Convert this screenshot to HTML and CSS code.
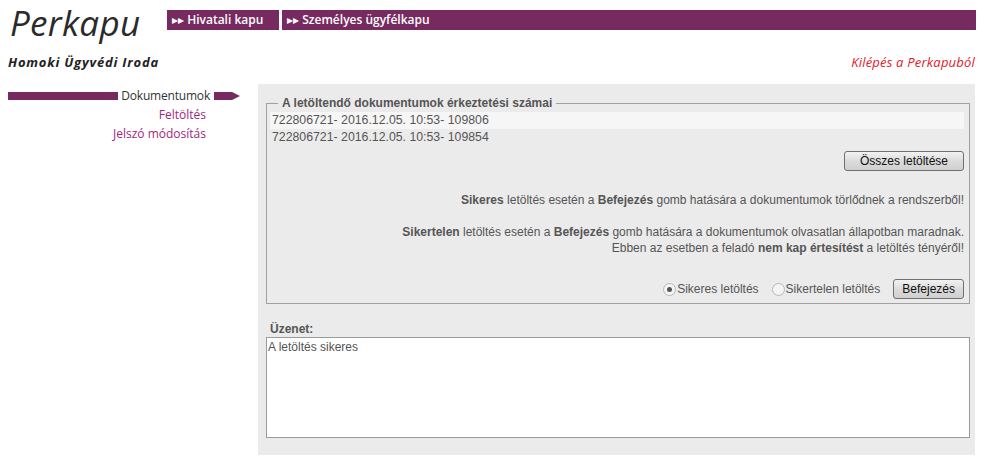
FILE: index.html
```html
<!DOCTYPE html>
<html lang="hu">
<head>
    <meta charset="UTF-8">
    <title>Perkapu</title>
    <link rel="stylesheet" href="styles.css">
</head>
<body>
    <div class="header">
        <div class="logo">Perkapu</div>
        <div class="topnav">
            <a class="topnav-item first">&#9656;&#9656; Hivatali kapu</a>
            <a class="topnav-item">&#9656;&#9656; Személyes ügyfélkapu</a>
        </div>
    </div>

    <div class="subheader">
        <span class="office">Homoki Ügyvédi Iroda</span>
        <a class="logout">Kilépés a Perkapuból</a>
    </div>

    <div class="page">
        <div class="sidemenu">
            <div class="menu-item active"><span>Dokumentumok</span></div>
            <div class="menu-item">Feltöltés</div>
            <div class="menu-item">Jelszó módosítás</div>
        </div>

        <div class="content">
            <fieldset class="docs">
                <legend>A letöltendő dokumentumok érkeztetési számai</legend>
                <div class="doc-row odd">722806721- 2016.12.05. 10:53- 109806</div>
                <div class="doc-row">722806721- 2016.12.05. 10:53- 109854</div>

                <div class="btn-line">
                    <button class="btn wide">Összes letöltése</button>
                </div>

                <p class="note"><b>Sikeres</b> letöltés esetén a <b>Befejezés</b> gomb hatására a dokumentumok törlődnek a rendszerből!</p>
                <p class="note"><b>Sikertelen</b> letöltés esetén a <b>Befejezés</b> gomb hatására a dokumentumok olvasatlan állapotban maradnak.<br>Ebben az esetben a feladó <b>nem kap értesítést</b> a letöltés tényéről!</p>

                <div class="finish-line">
                    <label class="radio"><span class="dot checked"></span>Sikeres letöltés</label>
                    <label class="radio"><span class="dot"></span>Sikertelen letöltés</label>
                    <button class="btn">Befejezés</button>
                </div>
            </fieldset>

            <div class="msg-label">Üzenet:</div>
            <div class="msg-box">A letöltés sikeres</div>
        </div>
    </div>
</body>
</html>
```

FILE: styles.css
```css
* {
    box-sizing: border-box;
}

body {
    margin: 0;
    background: #fff;
    font-family: "Open Sans", "DejaVu Sans", sans-serif;
    color: #222;
    height: 458px;
    overflow: hidden;
}

.header {
    display: flex;
    align-items: flex-start;
    padding: 0 12px 0 10px;
    height: 50px;
}

.logo {
    font-style: italic;
    font-size: 35px;
    line-height: 46px;
    color: #2a2a2a;
    letter-spacing: 0.3px;
    width: 157px;
    white-space: nowrap;
}

.topnav {
    flex: 1;
    display: flex;
    margin-top: 10px;
    height: 20px;
    background: #772a5f;
}

.topnav-item {
    color: #fff;
    font-size: 12px;
    font-weight: 600;
    line-height: 20px;
    padding-left: 5px;
    white-space: nowrap;
}

.topnav-item.first {
    width: 115px;
    border-right: 3px solid #fff;
}

.subheader {
    display: flex;
    justify-content: space-between;
    padding: 3px 13px 0 8px;
    height: 34px;
    font-size: 13px;
    font-style: italic;
}

.office {
    font-weight: 700;
    color: #222;
    letter-spacing: 0.8px;
}

.logout {
    color: #e0202a;
    letter-spacing: 0.2px;
}

.page {
    display: flex;
}

.sidemenu {
    width: 258px;
    padding: 2px 0 0 8px;
}

.menu-item {
    width: 198px;
    text-align: right;
    font-size: 12px;
    line-height: 19px;
    color: #a0287a;
}

.menu-item.active {
    position: relative;
    width: 224px;
    color: #333;
    background: linear-gradient(#772a5f, #772a5f) 0 6px / 100% 8px no-repeat;
    padding-right: 18px;
}

.menu-item.active::after {
    content: "";
    position: absolute;
    right: -8px;
    top: 6px;
    border-left: 8px solid #772a5f;
    border-top: 4px solid transparent;
    border-bottom: 4px solid transparent;
}

.menu-item.active span {
    background: #fff;
    padding: 0 4px 0 3px;
    letter-spacing: -0.2px;
}

.content {
    width: 717px;
    height: 371px;
    background: #ebebeb;
    padding: 12px 5px 0 8px;
    font-family: "Liberation Sans", Arial, sans-serif;
    font-size: 12px;
    color: #555;
}

.docs {
    margin: 0;
    border: 1px solid #a0a0a0;
    padding: 2px 5px 2px 3px;
    height: 208px;
}

.docs legend {
    font-weight: 700;
    padding: 0 4px;
    margin-left: 8px;
}

.doc-row {
    line-height: 17px;
    padding-left: 2px;
    font-size: 12.3px;
}

.doc-row.odd {
    background: #f6f6f6;
}

.btn-line {
    display: flex;
    justify-content: flex-end;
    margin-top: 5px;
}

.btn {
    font-family: "Liberation Sans", Arial, sans-serif;
    font-size: 12px;
    color: #111;
    height: 20px;
    padding: 0 8px;
    border: 1px solid #707070;
    border-radius: 3px;
    background: linear-gradient(#f2f2f2, #dcdcdc 50%, #cfcfcf);
}

.btn.wide {
    width: 120px;
}

.note {
    margin: 21px 0 0;
    text-align: right;
    line-height: 16px;
}

.note + .note {
    margin-top: 16px;
}

.finish-line {
    display: flex;
    justify-content: flex-end;
    align-items: center;
    margin-top: 23px;
}

.radio {
    display: flex;
    align-items: center;
    margin-right: 13px;
}

.dot {
    width: 13px;
    height: 13px;
    border-radius: 50%;
    border: 1px solid #b8b8b8;
    background: #f4f4f4;
    margin-right: 1px;
    display: flex;
    align-items: center;
    justify-content: center;
}

.dot.checked::after {
    content: "";
    width: 5px;
    height: 5px;
    border-radius: 50%;
    background: #555;
}

.msg-label {
    font-weight: 700;
    margin: 18px 0 0 4px;
    line-height: 15px;
}

.msg-box {
    height: 101px;
    background: #fff;
    border: 1px solid #9a9a9a;
    padding: 2px 1px;
    line-height: 15px;
}
```
